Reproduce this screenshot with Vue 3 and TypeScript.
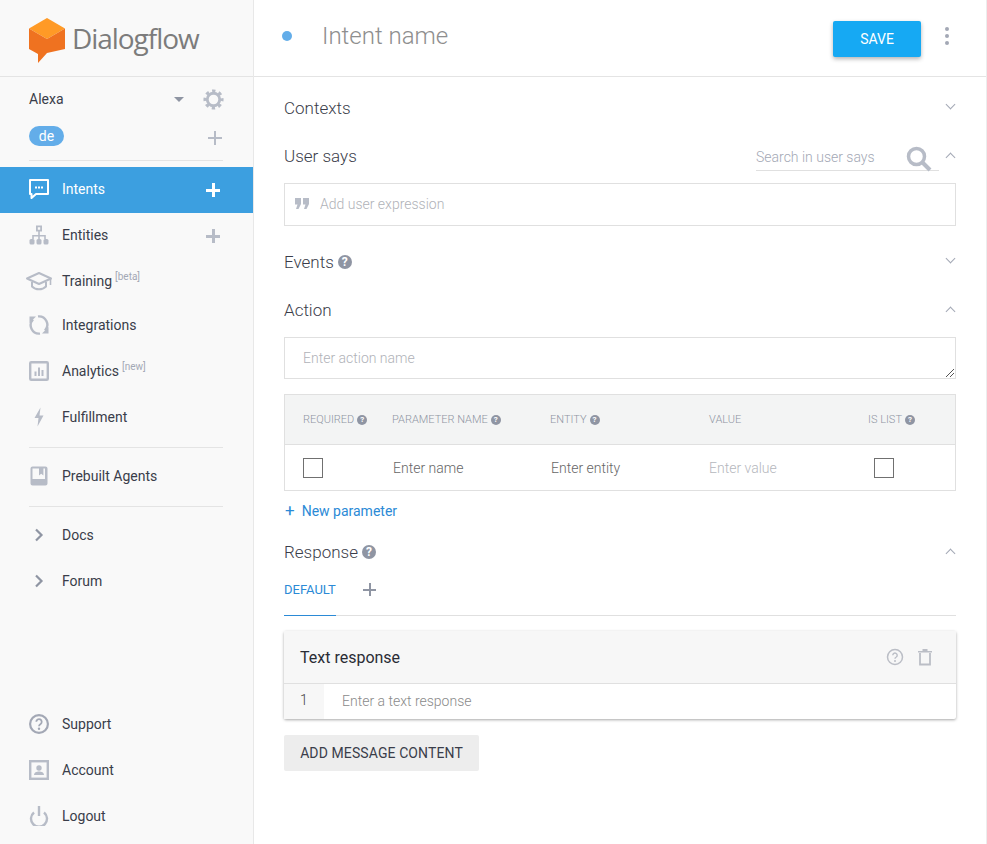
<script setup lang="ts">
interface NavItem {
  label: string
  icon: string
  tag?: string
  add?: boolean
  active?: boolean
}

const navGroups: { items: NavItem[]; cls: string }[] = [
  {
    cls: 'group-main',
    items: [
      { label: 'Intents', icon: 'intents', add: true, active: true },
      { label: 'Entities', icon: 'entities', add: true },
      { label: 'Training', icon: 'training', tag: '[beta]' },
      { label: 'Integrations', icon: 'integrations' },
      { label: 'Analytics', icon: 'analytics', tag: '[new]' },
      { label: 'Fulfillment', icon: 'fulfillment' },
    ],
  },
  { cls: 'group-prebuilt', items: [{ label: 'Prebuilt Agents', icon: 'prebuilt' }] },
  {
    cls: 'group-links',
    items: [
      { label: 'Docs', icon: 'chevron' },
      { label: 'Forum', icon: 'chevron' },
    ],
  },
  {
    cls: 'group-footer',
    items: [
      { label: 'Support', icon: 'support' },
      { label: 'Account', icon: 'account' },
      { label: 'Logout', icon: 'logout' },
    ],
  },
]

const paramHeads = [
  { label: 'REQUIRED', help: true },
  { label: 'PARAMETER NAME', help: true },
  { label: 'ENTITY', help: true },
  { label: 'VALUE', help: false },
  { label: 'IS LIST', help: true },
]
</script>

<template>
  <div class="app">
    <aside class="sidebar">
      <div class="brand">
        <svg class="logo" viewBox="0 0 36 46" width="36" height="46">
          <path d="M18 0 L36 10.5 L18 21 L0 10.5 Z" fill="#ff9a26" />
          <path d="M0 10.5 L18 21 L36 10.5 V31 L18 35 L9 45 V36 L0 31 Z" fill="#ef7220" />
        </svg>
        <span class="brand-name">Dialogflow</span>
      </div>

      <div class="agent">
        <div class="agent-row">
          <span class="agent-name">Alexa</span>
          <span class="caret" />
          <svg class="gear" viewBox="0 0 24 24" width="23" height="23">
            <circle cx="12" cy="12" r="6.5" fill="none" stroke="#b7bcc7" stroke-width="3" />
            <circle cx="12" cy="12" r="9" fill="none" stroke="#b7bcc7" stroke-width="3" stroke-dasharray="3.5 3.57" stroke-dashoffset="1.75" />
          </svg>
        </div>
        <div class="lang-row">
          <span class="lang">de</span>
          <span class="plus small" />
        </div>
      </div>

      <nav v-for="group in navGroups" :key="group.cls" class="nav" :class="group.cls">
        <a
          v-for="item in group.items"
          :key="item.label"
          class="nav-item"
          :class="{ active: item.active, short: item.icon === 'training' }"
        >
          <span class="nav-icon">
            <svg v-if="item.icon === 'intents'" viewBox="0 0 20 20" width="20" height="20">
              <path d="M1 1 H19 V15 H7 L2.5 19 V15 H1 Z" fill="none" stroke="#fff" stroke-width="2" stroke-linejoin="round" />
              <path d="M6 7.5h2v2H6zM9 7.5h2v2H9zM12 7.5h2v2h-2z" fill="#fff" />
            </svg>
            <svg v-else-if="item.icon === 'entities'" viewBox="0 0 20 20" width="20" height="20">
              <path d="M7 0.5h6v6H7z M8.8 2.3v2.4h2.4V2.3z" fill="#b7bcc7" fill-rule="evenodd" />
              <path d="M9.2 6h1.6v4h6v4h-1.6v-2.4h-4.4V14H9.2v-2.4H4.8V14H3.2v-4h6z" fill="#b7bcc7" />
              <rect x="0.5" y="14" width="5" height="5.5" rx="1.5" fill="#b7bcc7" />
              <rect x="7.5" y="14" width="5" height="5.5" rx="1.5" fill="#b7bcc7" />
              <rect x="14.5" y="14" width="5" height="5.5" rx="1.5" fill="#b7bcc7" />
            </svg>
            <svg v-else-if="item.icon === 'training'" viewBox="0 0 28 20" width="28" height="20">
              <path d="M14 2 L26 7.5 L14 13 L2 7.5 Z" fill="none" stroke="#b7bcc7" stroke-width="2" stroke-linejoin="round" />
              <path d="M7 11v4.5c2 2 4.5 2.8 7 2.8s5-.8 7-2.8V11" fill="none" stroke="#b7bcc7" stroke-width="2" />
              <path d="M25.5 8v6" stroke="#b7bcc7" stroke-width="1.6" />
            </svg>
            <svg v-else-if="item.icon === 'integrations'" viewBox="0 0 20 20" width="20" height="20">
              <path d="M4 4.5A8.4 8.4 0 0 0 11 18.6" fill="none" stroke="#b7bcc7" stroke-width="2.4" />
              <path d="M16 15.5A8.4 8.4 0 0 0 9 1.4" fill="none" stroke="#b7bcc7" stroke-width="2.4" />
              <path d="M0.5 1.5h6.5l-6.5 6.5z" fill="#b7bcc7" />
              <path d="M19.5 18.5h-6.5l6.5-6.5z" fill="#b7bcc7" />
            </svg>
            <svg v-else-if="item.icon === 'analytics'" viewBox="0 0 20 20" width="20" height="20">
              <rect x="1.2" y="1.2" width="17.6" height="17.6" rx="1" fill="none" stroke="#b7bcc7" stroke-width="2.4" />
              <path d="M5.5 10.5h2V15h-2zM9 6.5h2V15H9zM12.5 9h2v6h-2z" fill="#b7bcc7" />
            </svg>
            <svg v-else-if="item.icon === 'fulfillment'" viewBox="0 0 20 20" width="20" height="20">
              <path d="M11.5 0.5 L5.5 11 H9.5 L8.5 19.5 L14.5 8.5 H10.5 Z" fill="#b7bcc7" />
            </svg>
            <svg v-else-if="item.icon === 'prebuilt'" viewBox="0 0 20 20" width="20" height="20">
              <path d="M3.5 0.5h13A2 2 0 0 1 18.5 2.5v15a2 2 0 0 1-2 2h-13a2 2 0 0 1-2-2v-15a2 2 0 0 1 2-2z" fill="#b7bcc7" />
              <path d="M3.5 2.5h6.5v7l2.2-1.8 2.2 1.8v-7h1.600v10.5h-12.500z" fill="#f9f9f9" />
            </svg>
            <svg v-else-if="item.icon === 'chevron'" viewBox="0 0 10 14" width="10" height="14">
              <path d="M2 1.5 L7.5 7 L2 12.5" fill="none" stroke="#8f95a3" stroke-width="2.2" />
            </svg>
            <svg v-else-if="item.icon === 'support'" viewBox="0 0 20 20" width="20" height="20">
              <circle cx="10" cy="10" r="8.9" fill="none" stroke="#a3a8b5" stroke-width="2.2" />
              <path d="M7.3 7.8a2.7 2.7 0 1 1 4.3 2.2c-1 .7-1.6 1.2-1.6 2.2" fill="none" stroke="#a3a8b5" stroke-width="1.8" />
              <circle cx="10" cy="14.7" r="1.2" fill="#a3a8b5" />
            </svg>
            <svg v-else-if="item.icon === 'account'" viewBox="0 0 20 20" width="20" height="20">
              <rect x="1.2" y="1.2" width="17.6" height="17.6" fill="none" stroke="#b7bcc7" stroke-width="2.4" />
              <circle cx="10" cy="8" r="2.7" fill="#b7bcc7" />
              <path d="M5 15c0-2.5 2.5-3.5 5-3.500s5 1 5 3.500z" fill="#b7bcc7" />
            </svg>
            <svg v-else viewBox="0 0 20 20" width="20" height="20">
              <path d="M5 6.500A8 8 0 1 0 15 6.500" fill="none" stroke="#b7bcc7" stroke-width="2.4" />
              <path d="M10 0v10" stroke="#b7bcc7" stroke-width="2.4" />
            </svg>
          </span>
          <span class="nav-label">{{ item.label }}</span>
          <sup v-if="item.tag" class="nav-tag">{{ item.tag }}</sup>
          <span v-if="item.add" class="plus" />
        </a>
      </nav>
    </aside>

    <main class="main">
      <header class="topbar">
        <span class="dot" />
        <span class="intent-name">Intent name</span>
        <button class="save">SAVE</button>
        <span class="kebab"><i /><i /><i /></span>
      </header>

      <div class="content">
        <section class="sec sec-contexts">
          <h2>Contexts</h2>
          <span class="chev down" />
        </section>

        <section class="sec sec-says">
          <h2>User says</h2>
          <div class="search">
            <span>Search in user says</span>
            <svg viewBox="0 0 26 26" width="26" height="26">
              <circle cx="10.5" cy="10.5" r="8" fill="none" stroke="#b7bcc7" stroke-width="3.5" />
              <path d="M16.5 16.5 L24 24" stroke="#b7bcc7" stroke-width="4" />
            </svg>
          </div>
          <span class="chev up" />
        </section>
        <div class="box expression">
          <svg viewBox="0 0 14 11" width="14" height="11">
            <path d="M0 0h6v6L3.5 11H1l1.5-4.5H0zM8 0h6v6l-2.5 5H9l1.5-4.5H8z" fill="#b7bcc7" />
          </svg>
          <span>Add user expression</span>
        </div>

        <section class="sec sec-events">
          <h2>Events</h2>
          <span class="help big">?</span>
          <span class="chev down" />
        </section>

        <section class="sec sec-action">
          <h2>Action</h2>
          <span class="chev up" />
        </section>
        <div class="box action-name">
          <span>Enter action name</span>
          <svg class="grip" viewBox="0 0 10 10" width="10" height="10">
            <path d="M1 9 L9 1 M5 9 L9 5" stroke="#555" stroke-width="1" />
          </svg>
        </div>

        <div class="params">
          <div class="param-head">
            <span v-for="head in paramHeads" :key="head.label" class="cell">
              {{ head.label }}<span v-if="head.help" class="help tiny">?</span>
            </span>
          </div>
          <div class="param-row">
            <span class="cell"><i class="check" /></span>
            <span class="cell dark">Enter name</span>
            <span class="cell dark">Enter entity</span>
            <span class="cell light">Enter value</span>
            <span class="cell"><i class="check list" /></span>
          </div>
        </div>

        <a class="new-param"><b>+</b>New parameter</a>

        <section class="sec sec-response">
          <h2>Response</h2>
          <span class="help big">?</span>
          <span class="chev up" />
        </section>

        <div class="tabs">
          <span class="tab">DEFAULT</span>
          <span class="plus tab-plus" />
        </div>

        <div class="card">
          <div class="card-head">
            <span>Text response</span>
            <svg viewBox="0 0 18 18" width="18" height="18">
              <circle cx="9" cy="9" r="7.5" fill="none" stroke="#bbbec6" stroke-width="1.5" />
              <path d="M6.8 7.2a2.2 2.2 0 1 1 3.5 1.8c-.8.5-1.3 1-1.3 1.8" fill="none" stroke="#bbbec6" stroke-width="1.4" />
              <circle cx="9" cy="13" r="1" fill="#bbbec6" />
            </svg>
            <svg class="trash" viewBox="0 0 14 18" width="14" height="18">
              <path d="M0 3h14v1.5H0zM4.5 1h5v2h-5z" fill="#bbbec6" />
              <path d="M2 5v11.500h10V5" fill="none" stroke="#bbbec6" stroke-width="1.8" />
            </svg>
          </div>
          <div class="card-row">
            <span class="num">1</span>
            <span class="text-input">Enter a text response</span>
          </div>
        </div>

        <button class="add-content">ADD MESSAGE CONTENT</button>
      </div>
    </main>
  </div>
</template>

<style>
html,
body {
  margin: 0;
  background: #fff;
}
</style>

<style scoped>
.app {
  display: flex;
  width: 987px;
  height: 844px;
  overflow: hidden;
  font-family: Roboto, "Liberation Sans", sans-serif;
  color: #3a3d4a;
  border-right: 1px solid #eceded;
  box-sizing: border-box;
}

/* Sidebar */
.sidebar {
  width: 254px;
  flex: none;
  display: flex;
  flex-direction: column;
  background: #f9f9f9;
  border-right: 1px solid #e8e8e8;
  box-sizing: border-box;
}
.brand {
  height: 77px;
  flex: none;
  box-sizing: border-box;
  display: flex;
  align-items: flex-start;
  padding: 18px 0 0 29px;
  border-bottom: 1px solid #e4e4e4;
}
.brand-name {
  margin: 3px 0 0 7px;
  font-size: 28px;
  line-height: 34px;
  color: #7c7c7c;
  font-family: "Open Sans", sans-serif;
  letter-spacing: -1.05px;
}
.agent {
  margin: 0 30px 0 29px;
  height: 84px;
  box-sizing: border-box;
  border-bottom: 1px solid #e4e4e4;
}
.agent-row {
  display: flex;
  align-items: center;
  height: 44px;
  font-size: 14px;
}
.agent-name {
  flex: 1;
}
.caret {
  width: 0;
  height: 0;
  border: 5px solid transparent;
  border-top: 5px solid #8f95a3;
  border-bottom: 0;
  margin-right: 18px;
}
.gear {
  margin-right: -2px;
}
.lang-row {
  display: flex;
  align-items: center;
  justify-content: space-between;
  height: 20px;
  margin-top: 5px;
}
.lang {
  width: 35px;
  height: 20px;
  border-radius: 10px;
  background: #63ade9;
  color: #fff;
  font-size: 14px;
  line-height: 20px;
  text-align: center;
}
.plus {
  display: inline-block;
  width: 14px;
  height: 14px;
  flex: none;
  background:
    linear-gradient(#b7bcc7, #b7bcc7) center / 100% 3px no-repeat,
    linear-gradient(#b7bcc7, #b7bcc7) center / 3px 100% no-repeat;
}
.lang-row .plus {
  margin: 4px 1px 0 0;
  background:
    linear-gradient(#b7bcc7, #b7bcc7) center / 100% 2px no-repeat,
    linear-gradient(#b7bcc7, #b7bcc7) center / 2px 100% no-repeat;
}
.nav {
  display: flex;
  flex-direction: column;
}
.group-main {
  margin-top: 6px;
  padding-bottom: 6px;
}
.group-main::after,
.group-prebuilt::after {
  content: "";
  height: 1px;
  margin: 6px 30px 0 29px;
  background: #e4e4e4;
}
.group-main .nav-item,
.group-prebuilt .nav-item {
  padding-bottom: 2px;
}
.group-main .nav-item.short {
  height: 44px;
  padding-bottom: 0;
}
.group-links {
  margin-top: 5px;
}
.group-footer {
  margin-top: auto;
  padding-bottom: 5px;
}
.nav-item {
  display: flex;
  align-items: center;
  box-sizing: border-box;
  height: 46px;
  padding: 0 30px 0 29px;
  font-size: 14px;
  color: #3a3d4a;
}
.nav-item.active {
  background: #3c9fe0;
  color: #fff;
}
.nav-item .plus {
  margin: 2px 3px 0 auto;
}
.nav-item.active .plus {
  background:
    linear-gradient(#fff, #fff) center / 100% 3px no-repeat,
    linear-gradient(#fff, #fff) center / 3px 100% no-repeat;
}
.nav-icon {
  display: flex;
  justify-content: center;
  align-items: center;
  width: 20px;
  margin-right: 13px;
  flex: none;
}
.nav-icon svg {
  flex: none;
}
.nav-tag {
  margin: -9px 0 0 3px;
  font-size: 10px;
  color: #a3a8b5;
  line-height: 1;
}

/* Main */
.main {
  flex: 1;
  min-width: 0;
  background: #fff;
}
.topbar {
  height: 77px;
  box-sizing: border-box;
  display: flex;
  align-items: center;
  padding: 0 37px 4px 28px;
  border-bottom: 1px solid #e4e4e4;
}
.dot {
  width: 10px;
  height: 10px;
  border-radius: 50%;
  background: #63ade9;
}
.intent-name {
  margin-left: 30px;
  flex: 1;
  font-size: 24px;
  font-weight: 300;
  color: #8e8e8e;
}
.save {
  width: 88px;
  height: 36px;
  margin-top: 5px;
  border: 0;
  border-radius: 2px;
  background: #16a9f3;
  color: #fff;
  font: 400 14px Roboto, sans-serif;
  box-shadow: 0 2px 4px rgba(0, 0, 0, 0.3);
}
.kebab {
  display: flex;
  flex-direction: column;
  gap: 3px;
  margin-left: 24px;
}
.kebab i {
  width: 4px;
  height: 4px;
  border-radius: 50%;
  background: #a3a8b5;
}
.content {
  padding: 0 30px;
}
.sec {
  position: relative;
  display: flex;
  align-items: center;
  height: 24px;
}
.sec h2 {
  margin: 0;
  font-size: 17px;
  font-weight: 300;
  color: #3a3d4a;
}
.chev {
  position: absolute;
  right: 2px;
  width: 7px;
  height: 7px;
  border-right: 1px solid #a3a8b5;
  border-bottom: 1px solid #a3a8b5;
  box-sizing: border-box;
}
.chev.down {
  top: 5px;
  transform: rotate(45deg);
}
.chev.up {
  top: 10px;
  transform: rotate(-135deg);
}
.sec-contexts {
  margin-top: 19px;
}
.sec-says,
.sec-events,
.sec-action {
  margin-top: 24px;
}
.sec-response {
  margin-top: 19px;
}
.help {
  display: inline-block;
  border-radius: 50%;
  background: #8f95a3;
  color: #fff;
  text-align: center;
  font-weight: 700;
}
.help.big {
  width: 14px;
  height: 14px;
  line-height: 14px;
  font-size: 12px;
  margin-left: 4px;
}
.help.tiny {
  width: 10px;
  height: 10px;
  line-height: 10px;
  font-size: 8px;
  margin-left: 3px;
  vertical-align: 1px;
}
.search {
  position: absolute;
  right: 17px;
  top: 0;
  width: 183px;
  height: 27px;
  box-sizing: border-box;
  display: flex;
  align-items: center;
  justify-content: space-between;
  border-bottom: 1px solid #e0e0e0;
  font-size: 14px;
  font-weight: 300;
  color: #a3a8b5;
}
.search svg {
  margin: 4px 7px 0 0;
}
.box {
  position: relative;
  display: flex;
  align-items: center;
  box-sizing: border-box;
  border: 1px solid #e0e0e0;
  font-size: 14px;
  font-weight: 300;
  color: #b0b2b8;
}
.expression {
  height: 43px;
  margin-top: 15px;
  padding: 0 0 2px 10px;
}
.expression svg {
  margin-right: 11px;
}
.action-name {
  height: 42px;
  margin-top: 15px;
  padding-left: 18px;
}
.grip {
  position: absolute;
  right: 0;
  bottom: 0;
}
.params {
  margin-top: 15px;
  border: 1px solid #e0e0e0;
}
.param-head,
.param-row {
  display: grid;
  grid-template-columns: 89px 158px 159px 159px 1fr;
  align-items: center;
  padding-left: 18px;
}
.param-head {
  height: 49px;
  background: #f3f4f4;
  border-bottom: 1px solid #e0e0e0;
  font-size: 11px;
  font-weight: 300;
  color: #8f95a3;
}
.param-row {
  height: 45px;
  font-size: 14px;
  font-weight: 300;
}
.dark {
  color: #666;
  padding-left: 1px;
}
.light {
  color: #b5b7bd;
}
.check {
  display: block;
  width: 20px;
  height: 20px;
  box-sizing: border-box;
  border: 1px solid #707070;
}
.check.list {
  margin-left: 6px;
}
.new-param {
  display: flex;
  align-items: center;
  height: 20px;
  margin-top: 10px;
  font-size: 14px;
  color: #2b8ad6;
}
.new-param b {
  font-size: 17px;
  font-weight: 400;
  margin: -2px 7px 0 1px;
}
.tabs {
  display: flex;
  align-items: flex-start;
  height: 35px;
  margin-top: 16px;
  border-bottom: 1px solid #e0e0e0;
}
.tab {
  flex: none;
  width: 52px;
  height: 36px;
  box-sizing: border-box;
  padding-top: 2px;
  line-height: 16px;
  border-bottom: 1px solid #2b8ad6;
  font-size: 13px;
  color: #2b8ad6;
}
.plus.tab-plus {
  margin: 3px 0 0 27px;
  width: 13px;
  height: 13px;
  background:
    linear-gradient(#8f95a3, #8f95a3) center / 100% 2px no-repeat,
    linear-gradient(#8f95a3, #8f95a3) center / 2px 100% no-repeat;
}
.card {
  margin-top: 15px;
  background: #fff;
  border-radius: 2px;
  box-shadow: 0 1px 3px rgba(0, 0, 0, 0.35);
}
.card-head {
  display: flex;
  align-items: center;
  height: 53px;
  box-sizing: border-box;
  padding: 0 24px 0 16px;
  background: #f7f7f7;
  border-bottom: 1px solid #e0e0e0;
  font-size: 16px;
  color: #2a2c35;
}
.card-head span {
  flex: 1;
}
.trash {
  margin-left: 14px;
}
.card-row {
  display: flex;
  align-items: center;
  height: 35px;
  font-size: 14px;
  font-weight: 300;
  color: #8a8a8a;
}
.num {
  width: 40px;
  height: 100%;
  background: #f7f7f7;
  text-align: center;
  line-height: 33px;
  color: #444;
}
.text-input {
  margin-left: 18px;
  padding-bottom: 2px;
}
.add-content {
  display: block;
  margin-top: 16px;
  width: 195px;
  height: 36px;
  border: 0;
  border-radius: 2px;
  background: #ededed;
  color: #3a3d4a;
  font: 400 14px Roboto, sans-serif;
  letter-spacing: 0.1px;
}
</style>
